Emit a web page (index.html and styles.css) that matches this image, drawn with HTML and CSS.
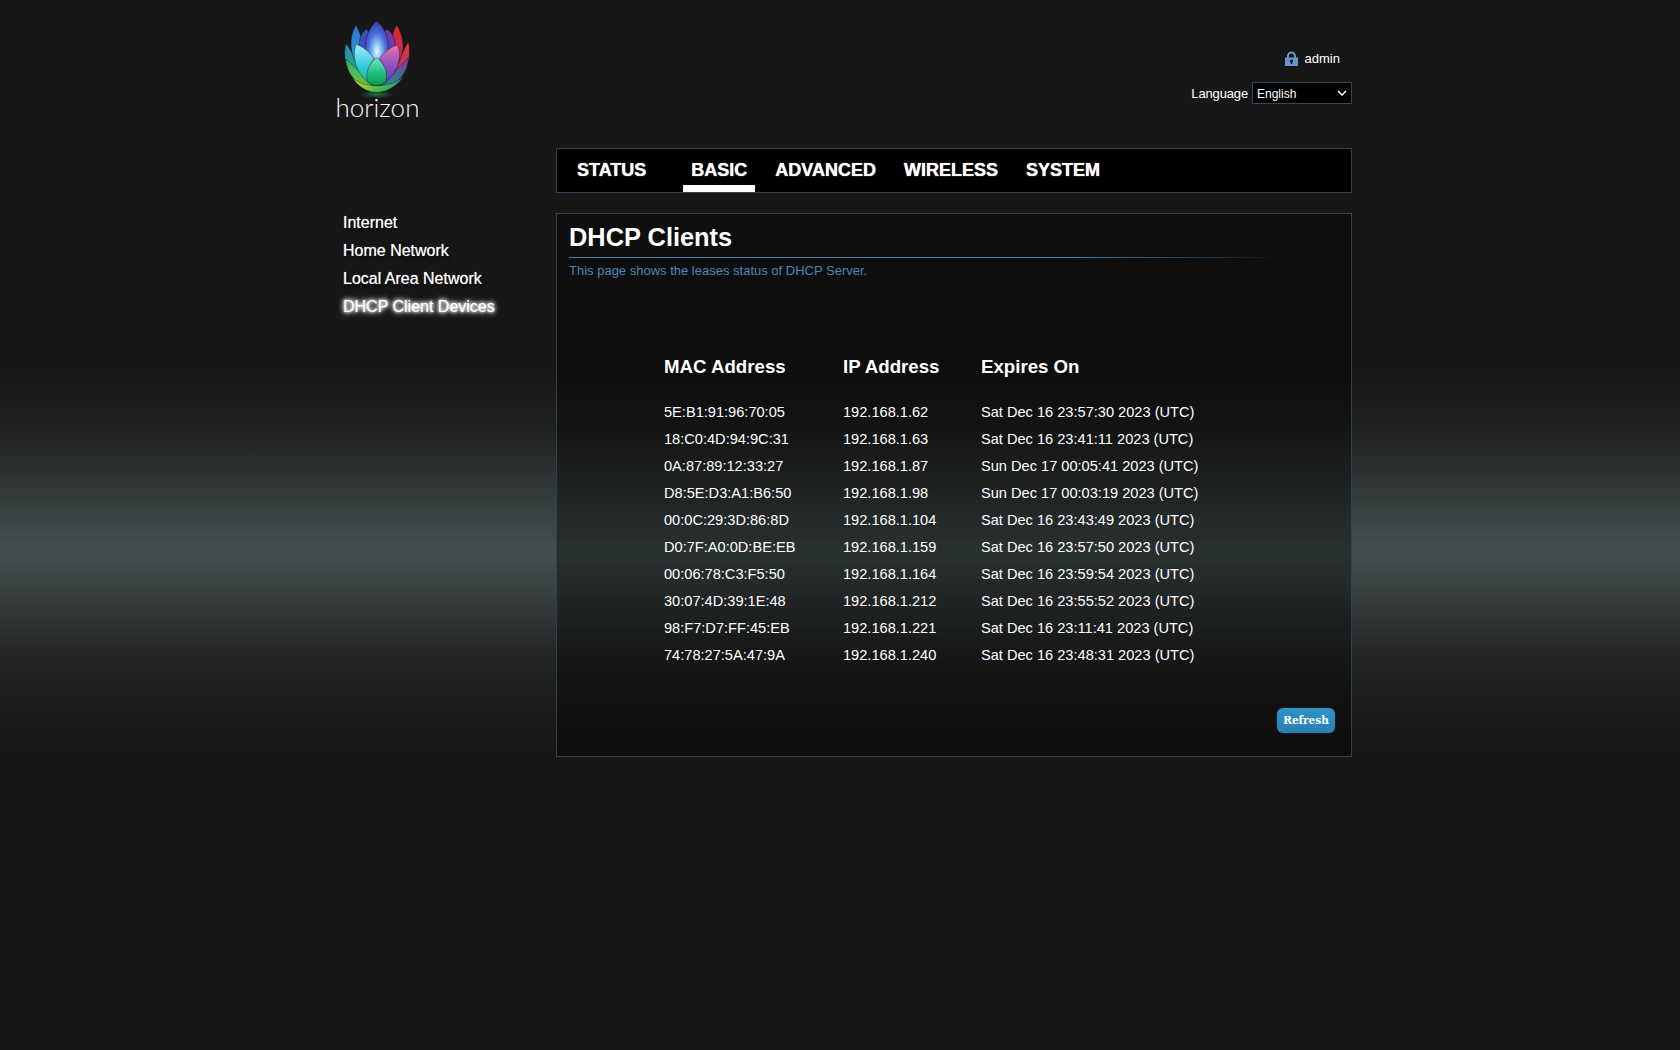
FILE: index.html
```html
<!DOCTYPE html>
<html lang="en">
<head>
<meta charset="utf-8">
<title>DHCP Clients</title>
<link rel="stylesheet" href="styles.css">
</head>
<body>
<div class="page">
  <header class="top">
    <div class="brand">
      <svg class="flower" width="75" height="85" viewBox="0 0 225 255" aria-hidden="true">
        <defs>
          <radialGradient id="core" cx="50%" cy="62%" r="60%"><stop offset="0" stop-color="#eefaff"/><stop offset=".28" stop-color="#8cc4f4"/><stop offset=".62" stop-color="#4d70dc"/><stop offset="1" stop-color="#3b3cae"/></radialGradient>
          <linearGradient id="o1" x1="0" y1="0" x2="0" y2="1"><stop offset="0" stop-color="#2a8ab8"/><stop offset="1" stop-color="#27a868"/></linearGradient>
          <linearGradient id="o2" x1="0" y1="0" x2="0" y2="1"><stop offset="0" stop-color="#dc3a28"/><stop offset="1" stop-color="#9a3a90"/></linearGradient>
          <linearGradient id="b1" x1="0" y1="0" x2="0" y2="1"><stop offset="0" stop-color="#2870d0"/><stop offset="1" stop-color="#2ab0d8"/></linearGradient>
          <linearGradient id="b2" x1="0" y1="0" x2="0" y2="1"><stop offset="0" stop-color="#e42a1c"/><stop offset="1" stop-color="#a82c78"/></linearGradient>
          <linearGradient id="f1" x1="0" y1="0" x2="0" y2="1"><stop offset="0" stop-color="#a8ecff"/><stop offset=".55" stop-color="#30c8dc"/><stop offset="1" stop-color="#18b07c"/></linearGradient>
          <linearGradient id="f2" x1="0" y1="0" x2="0" y2="1"><stop offset="0" stop-color="#e878ac"/><stop offset=".5" stop-color="#8c50c4"/><stop offset="1" stop-color="#4f40b4"/></linearGradient>
          <linearGradient id="l1" x1="0" y1="0" x2="0" y2="1"><stop offset="0" stop-color="#2ab07c"/><stop offset="1" stop-color="#78c42c"/></linearGradient>
          <linearGradient id="l2" x1="0" y1="0" x2="0" y2="1"><stop offset="0" stop-color="#8038a8"/><stop offset="1" stop-color="#1c9088"/></linearGradient>
          <linearGradient id="base" x1="0" y1="0" x2="1" y2="0"><stop offset="0" stop-color="#d0d430"/><stop offset=".45" stop-color="#50c048"/><stop offset="1" stop-color="#1c9a80"/></linearGradient>
          <linearGradient id="grn" x1="0" y1="0" x2="0" y2="1"><stop offset="0" stop-color="#7ce8c4"/><stop offset=".5" stop-color="#28c088"/><stop offset="1" stop-color="#0c9a50"/></linearGradient>
          <radialGradient id="glow"><stop offset="0" stop-color="#1f9a50" stop-opacity=".75"/><stop offset="1" stop-color="#1f9a50" stop-opacity="0"/></radialGradient>
        </defs>
        <ellipse cx="110" cy="238" rx="52" ry="12" fill="url(#glow)"/>
        <path d="M18 85C5 135 25 185 70 205C60 160 40 115 18 85Z" fill="url(#o1)"/>
        <path d="M205 80C218 135 195 185 155 205C165 160 185 115 205 80Z" fill="url(#o2)"/>
        <path d="M48 30C24 70 30 120 58 160C72 120 72 70 48 30Z" fill="url(#b1)"/>
        <path d="M170 30C198 75 194 120 166 160C150 115 146 70 170 30Z" fill="url(#b2)"/>
        <path d="M80 42C52 60 54 100 66 130L100 70Z" fill="#3b4fb8"/>
        <path d="M140 42C170 60 170 100 158 130L122 70Z" fill="#6a3ab0"/>
        <path d="M110 18C82 40 72 80 78 120C84 150 100 165 110 165C120 165 136 150 144 120C150 80 138 40 110 18Z" fill="url(#core)"/>
        <path d="M18 132C18 180 58 218 104 220C88 190 50 165 18 132Z" fill="url(#l1)"/>
        <path d="M205 128C205 178 165 218 118 220C135 190 175 165 205 128Z" fill="url(#l2)"/>
        <path d="M48 88C34 130 50 182 98 212C86 180 84 150 102 132C90 112 68 94 48 88Z" fill="url(#f1)"/>
        <path d="M172 90C190 130 170 182 122 212C136 180 136 150 118 132C130 112 152 96 172 90Z" fill="url(#f2)"/>
        <path d="M36 186C55 218 85 232 110 232C135 232 168 218 192 184C165 206 135 212 110 212C85 212 55 206 36 186Z" fill="url(#base)"/>
        <path d="M110 128C88 144 76 170 82 197C90 216 130 216 138 197C144 170 132 144 110 128Z" fill="url(#grn)"/>
      </svg>
      <div class="wordmark">horizon</div>
    </div>
    <div class="account">
      <div class="user">
        <svg class="lock" width="15" height="15" viewBox="0 0 15 15" aria-hidden="true"><path d="M3 7V5a4.5 4.5 0 0 1 9 0v2h-2V5a2.5 2.5 0 0 0-5 0v2Z" fill="#6a94cd"/><path d="M1 6.5h13V15H1Z" fill="#6a94cd"/><circle cx="7.5" cy="10" r="1.5" fill="#161617"/><rect x="6.8" y="10" width="1.4" height="3" fill="#161617"/></svg>
        <span>admin</span>
      </div>
      <div class="lang">
        <label for="lang">Language</label>
        <div class="select-wrap">
          <select id="lang" class="lang-select"><option>English</option></select>
          <svg class="chevron" width="10" height="6" viewBox="0 0 10 6" aria-hidden="true"><path d="M1 1l4 4 4-4" fill="none" stroke="#fff" stroke-width="1.5"/></svg>
        </div>
      </div>
    </div>
  </header>
  <nav class="tabs">
    <a class="tab tab-status">STATUS</a>
    <a class="tab tab-basic active">BASIC</a>
    <a class="tab">ADVANCED</a>
    <a class="tab">WIRELESS</a>
    <a class="tab">SYSTEM</a>
  </nav>
  <div class="body">
    <aside class="side">
      <a>Internet</a>
      <a>Home Network</a>
      <a>Local Area Network</a>
      <a class="current">DHCP Client Devices</a>
    </aside>
    <main class="panel">
      <h1>DHCP Clients</h1>
      <div class="rule"></div>
      <p class="intro">This page shows the leases status of DHCP Server.</p>
      <table class="clients">
        <thead><tr><th class="c1">MAC Address</th><th class="c2">IP Address</th><th>Expires On</th></tr></thead>
        <tbody>
          <tr><td>5E:B1:91:96:70:05</td><td>192.168.1.62</td><td>Sat Dec 16 23:57:30 2023 (UTC)</td></tr>
          <tr><td>18:C0:4D:94:9C:31</td><td>192.168.1.63</td><td>Sat Dec 16 23:41:11 2023 (UTC)</td></tr>
          <tr><td>0A:87:89:12:33:27</td><td>192.168.1.87</td><td>Sun Dec 17 00:05:41 2023 (UTC)</td></tr>
          <tr><td>D8:5E:D3:A1:B6:50</td><td>192.168.1.98</td><td>Sun Dec 17 00:03:19 2023 (UTC)</td></tr>
          <tr><td>00:0C:29:3D:86:8D</td><td>192.168.1.104</td><td>Sat Dec 16 23:43:49 2023 (UTC)</td></tr>
          <tr><td>D0:7F:A0:0D:BE:EB</td><td>192.168.1.159</td><td>Sat Dec 16 23:57:50 2023 (UTC)</td></tr>
          <tr><td>00:06:78:C3:F5:50</td><td>192.168.1.164</td><td>Sat Dec 16 23:59:54 2023 (UTC)</td></tr>
          <tr><td>30:07:4D:39:1E:48</td><td>192.168.1.212</td><td>Sat Dec 16 23:55:52 2023 (UTC)</td></tr>
          <tr><td>98:F7:D7:FF:45:EB</td><td>192.168.1.221</td><td>Sat Dec 16 23:11:41 2023 (UTC)</td></tr>
          <tr><td>74:78:27:5A:47:9A</td><td>192.168.1.240</td><td>Sat Dec 16 23:48:31 2023 (UTC)</td></tr>
        </tbody>
      </table>
      <div class="actions"><button class="refresh" type="button">Refresh</button></div>
    </main>
  </div>
</div>
</body>
</html>
```
FILE: styles.css
```css
* { box-sizing: border-box; }
html, body { margin: 0; height: 100%; }
body {
  min-height: 1050px;
  color: #fff;
  font-family: "Liberation Sans", Arial, sans-serif;
  background: linear-gradient(180deg, #171718 0, #171718 370px, #1d1d1d 410px, #272929 450px, #343a3a 495px, #445050 552px, #363c3c 600px, #262828 650px, #1c1c1c 700px, #171718 750px, #171718 100%);
}
.page { width: 1022px; margin-left: 330px; }
.top { display: flex; justify-content: space-between; height: 148px; }
.brand { width: 81px; margin-left: 7px; padding-top: 15px; display: flex; flex-direction: column; align-items: center; }
.flower { display: block; flex: none; filter: blur(.3px); }
.flower path { stroke: rgba(10, 10, 12, .55); stroke-width: 2; }
.wordmark { font-family: Lato, "Open Sans", sans-serif; font-weight: 300; font-size: 26px; line-height: 28px; margin-top: -7px; color: #f6f6f6; }
.account { width: 180px; padding-top: 50px; display: flex; flex-direction: column; align-items: flex-end; }
.user { display: flex; align-items: center; gap: 6px; font-size: 13px; line-height: 17px; padding-right: 12px; }
.lock { display: block; }
.lang { display: flex; align-items: center; gap: 4px; margin-top: 15px; font-size: 13px; letter-spacing: -.15px; }
.select-wrap { position: relative; width: 100px; height: 22px; }
.lang-select { appearance: none; display: block; width: 100%; height: 22px; background: #000; color: #fff; border: 1px solid #2b4a5c; font: 12px "Liberation Sans", Arial, sans-serif; padding: 1px 0 0 4px; border-radius: 0; }
.chevron { position: absolute; right: 5px; top: 8px; }
.tabs { margin-left: 226px; width: 796px; height: 45px; background: #000; border: 1px solid #2a4456; display: flex; }
.tab { display: block; height: 43px; margin-left: 12px; padding: 0 8px; font-weight: 700; font-size: 18px; line-height: 43px; text-shadow: 0 0 1px #fff; }
.tab-status { margin-left: 0; padding-left: 20px; }
.tab-basic { margin-left: 29px; }
.active { border-bottom: 7px solid #fff; }
.body { display: flex; margin-top: 20px; }
.side { width: 226px; display: flex; flex-direction: column; font-size: 16px; line-height: 28px; padding-left: 13px; margin-top: -4px; }
.side a { display: block; text-shadow: 1px 2px 3px #000, 0 0 1px #fff; }
.side .current { text-shadow: 0 0 3px #fff, 0 0 5px #fff, 0 0 6px #fff; }
.panel { width: 796px; height: 544px; border: 1px solid #2a4456; background: rgba(0, 0, 0, .38); padding: 0 16px 0 12px; display: flex; flex-direction: column; }
h1 { margin: 11px 0 0; font-size: 25.4px; line-height: 25px; font-weight: 700; }
.rule { height: 1px; margin-top: 7px; margin-right: 54px; background: linear-gradient(90deg, #4a7fa8, #4a7fa8 70%, transparent); }
.intro { margin: 5px 0 0; font-size: 13px; line-height: 16px; color: #4a88b8; }
.clients { margin: 76px 0 0 95px; border-collapse: collapse; font-size: 14.6px; }
.clients th { text-align: left; font-size: 18.67px; line-height: 24px; padding: 0 0 19px; }
.clients td { height: 27px; padding: 0; }
.c1 { width: 179px; }
.c2 { width: 138px; }
.actions { margin-top: auto; padding-bottom: 23px; display: flex; justify-content: flex-end; }
.refresh { width: 58px; height: 25px; border: 0; border-radius: 6px; background: linear-gradient(180deg, #2f93c8, #2a7fb0); color: #fff; font: 700 10.5px "DejaVu Serif", serif; padding: 0 0 2px; box-shadow: 0 0 2px #173a4c; }
```
